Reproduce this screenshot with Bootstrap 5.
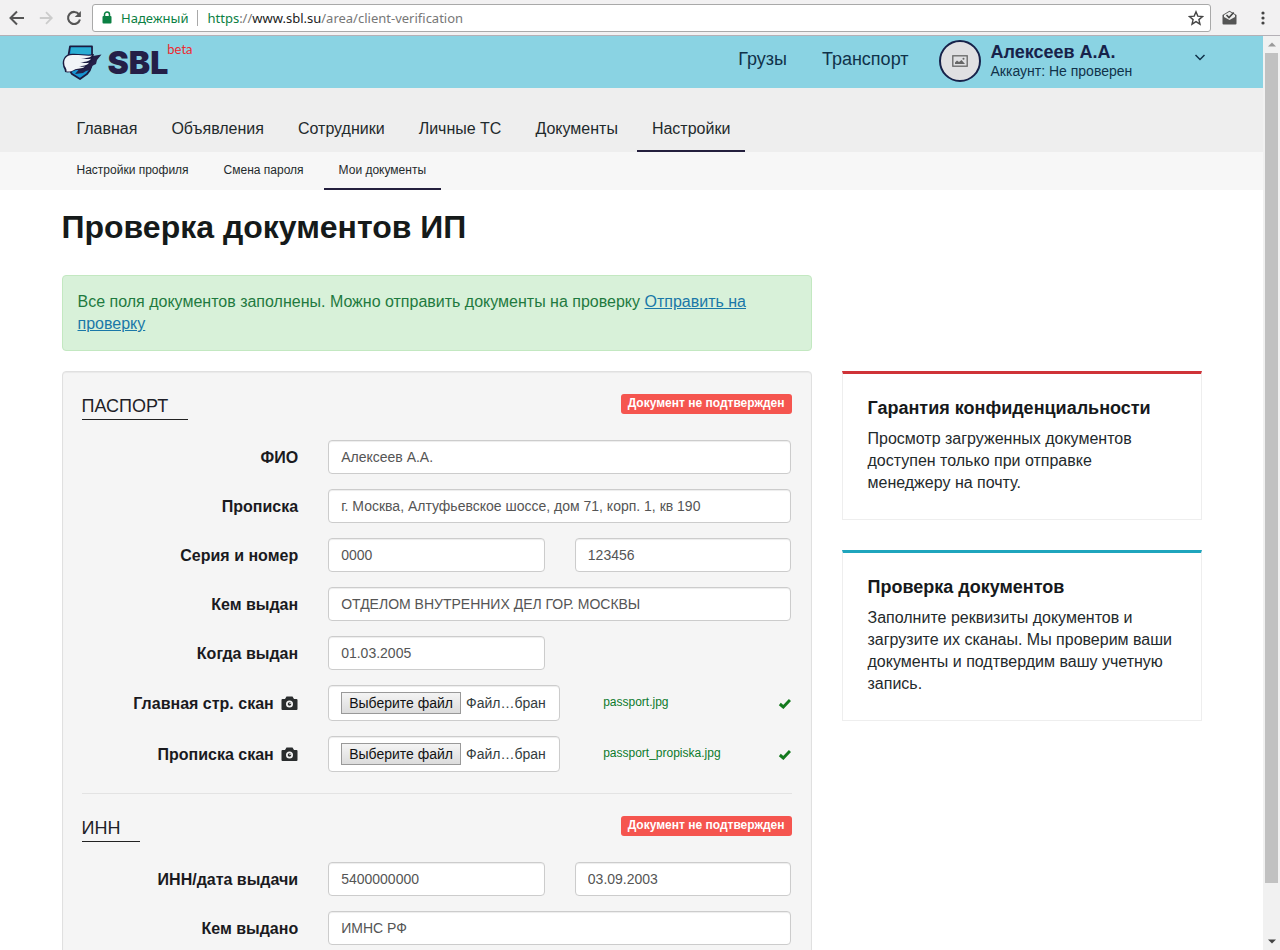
<!DOCTYPE html>
<html lang="ru">
<head>
<meta charset="utf-8">
<meta name="viewport" content="width=device-width, initial-scale=1">
<title>SBL — Проверка документов ИП</title>
<link href="https://cdn.jsdelivr.net/npm/bootstrap@5.3.0/dist/css/bootstrap.min.css" rel="stylesheet">
<style>
  body { font-family: "Liberation Sans", Arial, sans-serif; font-size: 16px; line-height: 22px; color: #1f2a2c; }
  a { color: inherit; text-decoration: none; }
  /* browser toolbar */
  .toolbar { height: 36px; background: #f2f1f2; border-bottom: 1px solid #b4b0b6; font: 13px/20px "Noto Sans", sans-serif; padding: 0 15px 0 8px; }
  .toolbar button, .account-toggle { border: 0; background: none; padding: 0; line-height: 0; }
  .omnibox { height: 28px; background: #fff; border: 1px solid #a9a9a9; border-radius: 3px; margin: 0 7px 0 10px; padding: 0 6px 0 9px; }
  .omnibox .secure { color: #0b8043; border-right: 1px solid #a9a9a9; line-height: 16px; padding-right: 9px; margin: 0 9px 0 9px; }
  .url-text { color: #777; }
  .url-text b { font-weight: 400; color: #222; }
  .url-text i { font-style: normal; color: #0b8043; }
  /* scrollbar */
  .scroll-rail { width: 17px; background: #f1f1f1; }
  .scroll-rail .arrow { height: 17px; line-height: 0; }
  .scroll-thumb { flex: 830 1 0; width: 13px; background: #c1c1c1; }
  .scroll-rest { flex: 50 1 0; }
  /* page */
  .wrap { max-width: 1170px; padding: 0 15px; margin: 0 auto; }
  .topbar { background: #8ad3e3; color: #17224a; }
  .topbar .wrap { height: 52px; padding-bottom: 2px; padding-right: 11px; }
  .brand-name { font: 900 32px/32px Inter, sans-serif; color: #241f47; margin: 3px 0 0 5px; }
  .brand-beta { font: 13px/16px Lato, sans-serif; color: #ee2a30; margin-top: 5px; margin-left: -1px; }
  .top-links { padding-bottom: 4px; gap: 35px; font-size: 18px; line-height: 24px; color: #10324a; }
  .avatar { width: 42px; height: 42px; border: 2px solid #17224a; border-radius: 50%; background: #e0e0e2; margin-left: 30px; }
  .account { width: 215px; margin-left: 10px; }
  .account-name { font-size: 18px; line-height: 20px; font-weight: 700; }
  .account-state { font-size: 14px; line-height: 18px; color: #10324a; }
  .mainnav { background: #eee; }
  .mainnav a { padding: 30px 15px 10px; border-bottom: 2px solid transparent; }
  .subnav { background: #f7f7f7; font-size: 12px; line-height: 18px; }
  .subnav .wrap { gap: 5px; }
  .subnav a { padding: 9px 15px 9px; border-bottom: 2px solid transparent; }
  .mainnav a.active, .subnav a.active { border-color: #241f3d; }
  h1 { font-size: 32px; line-height: 36px; font-weight: 700; color: #151a1a; margin: 19px 0 30px; }
  .gutter { --bs-gutter-x: 30px; }
  .notice { background: #d8f1d9; border: 1px solid #c3e8c1; border-radius: 4px; color: #1f7a3f; padding: 15px; margin-bottom: 20px; }
  .notice a { color: #1a78a8; text-decoration: underline; }
  .panel { background: #f5f5f5; border: 1px solid #e0e0e0; border-radius: 4px; box-shadow: inset 0 1px 1px rgba(0,0,0,.05); padding: 22px 19px 19px; }
  .doc-head { margin-bottom: 20px; }
  .doc-head h2 { font-size: 18px; line-height: 20px; font-weight: 400; color: #1f1f28; margin: 0; padding: 2px 20px 3px 0; border-bottom: 1px solid #222; }
  .state-tag { background: #f5554f; color: #fff; font-size: 12px; line-height: 18px; font-weight: 700; padding: 0 7px 2px; border-radius: 3px; }
  .line { margin-bottom: 15px; }
  .line .name { font-weight: 700; color: #1a1a1e; text-align: right; padding-top: 2px; }
  .name svg { margin-left: 3px; vertical-align: -1px; }
  .field { height: 34px; width: 100%; padding: 0 12px; font-size: 14px; color: #555; background: #fff; border: 1px solid #ccc; border-radius: 4px; box-shadow: inset 0 1px 1px rgba(0,0,0,.075); }
  .filebox { width: 232px; height: 36px; color: #333c40; white-space: nowrap; }
  .filebox button { border: 1px solid #999; background: linear-gradient(#f4f4f4, #dcdcdc); color: #111; height: 22px; line-height: 18px; padding: 0 7px; margin-right: 5px; }
  .filelink { font-size: 12px; line-height: 18px; color: #0b7a2c; margin-left: 43px; padding-bottom: 2px; }
  .rule { border-top: 1px solid #e3e3e3; margin: 21px 0 22px; }
  .info { background: #fff; border: 1px solid #eee; border-top: 3px solid #cf3338; padding: 23px 25px 25px; margin-bottom: 30px; }
  .info.teal { border-top-color: #1fa5bd; }
  .info h3 { font-size: 18px; line-height: 22px; font-weight: 700; color: #16191b; margin: 0 0 9px; }
  .info p { margin: 0; }
</style>
</head>
<body class="vh-100 overflow-hidden d-flex flex-column">

<div class="toolbar d-flex align-items-center flex-shrink-0">
  <button aria-label="Назад"><svg width="18" height="18" viewBox="0 0 18 18" fill="none" stroke="#555" stroke-width="2"><path d="M16 9H3M9 2.500 2.500 9 9 15.500"/></svg></button>
  <button class="ms-2 ps-1" aria-label="Вперёд"><svg width="16" height="18" viewBox="0 0 18 18" fill="none" stroke="#ccc" stroke-width="2"><path d="M2 9h13M9 2.500 15.500 9 9 15.500"/></svg></button>
  <button class="ms-2 ps-1" aria-label="Обновить"><svg width="16" height="18" viewBox="0 0 17 18"><path d="M13.800 5.200A6.400 6.400 0 1 0 14.800 10.500" fill="none" stroke="#555" stroke-width="2.200"/><path d="M15.800 1.500V8H9.300z" fill="#555"/></svg></button>
  <div class="omnibox d-flex align-items-center flex-fill">
    <svg width="10" height="13" viewBox="0 0 10 13"><path d="M2.500 6V3.500a2.500 2.500 0 0 1 5 0V6" fill="none" stroke="#0b8043" stroke-width="1.500"/><rect x=".5" y="5" width="9" height="7.500" rx="1" fill="#0b8043"/></svg>
    <span class="secure">Надежный</span>
    <a class="url-text flex-fill" href="#"><i>https</i>://<b>www.sbl.su</b>/area/client-verification</a>
    <button aria-label="В закладки"><svg width="16" height="16" viewBox="0 0 16 16"><path d="m8 1.800 1.800 4.300 4.700.4-3.600 3.100 1.100 4.600L8 11.700l-4 2.500 1.100-4.600L1.500 6.500l4.700-.4z" fill="none" stroke="#444" stroke-width="1.400"/></svg></button>
  </div>
  <button class="ms-1" aria-label="Почта"><svg width="15" height="15" viewBox="0 0 15 15"><path d="M.5 5 7.500.7 14.500 5v8.500a1 1 0 0 1-1 1h-12a1 1 0 0 1-1-1z" fill="#555"/><path d="M2 5 7.500 1.700 13 5v2L7.500 10 2 7z" fill="#eee"/><path d="m4.500 5 2.500 2.500 4.700-5" fill="none" stroke="#444" stroke-width="1.600"/></svg></button>
  <button class="ps-4" aria-label="Меню"><svg width="4" height="16" viewBox="0 0 4 16" fill="#444"><circle cx="2" cy="3" r="1.600"/><circle cx="2" cy="8" r="1.600"/><circle cx="2" cy="13" r="1.600"/></svg></button>
</div>

<div class="d-flex flex-fill overflow-hidden">
  <div class="flex-fill overflow-hidden">
    <header class="topbar">
      <div class="wrap d-flex align-items-center">
        <a class="d-flex align-items-center align-self-stretch" href="#">
          <svg class="mt-1" width="41" height="36" viewBox="0 0 41 36" aria-hidden="true">
            <path d="M8 1.500h22V10c1 8-1 15-5 19l-7 5-8-5C5 24 6 10 8 1.500z" fill="#1594d2" stroke="#1b1b40" stroke-width="1.800" stroke-linejoin="round"/>
            <path d="M8.900 2.400h20.200V9H8.900z" fill="#2aaed4"/>
            <path d="M28 11.500 39.500 9.500 35 15l-1 4-4 2-2 4-4 1-3 2-8 1z" fill="#241f47"/>
            <path d="M8 9C2 10 0 16 1 20c0 3 2 4 2 7 3 1 7 0 11-2 7 0 10-2 12-6 4-1 4-4 5-6l1-4c-7 2-15-1-24 0z" fill="#1b1b40"/>
            <path d="M8 10.300c8-1 15 1 22 .200-2 2.500-6 2.800-11 2.800 5 .9 7 .9 10 .5-2 3-6 3.300-11 3.500 4 .8 6 .8 9 .4-2 3-6 3.300-10 3.500 3 .7 4 .7 6 .4-3 3-8 1.400-11 3.400-3 2-6 1.500-7.500 1.500C5 23 2.300 22 2.300 19c-.5-4 1.200-7.500 5.700-8.700z" fill="#f1f4f8"/>
          </svg>
          <span class="brand-name">SBL</span><span class="brand-beta align-self-start">beta</span>
        </a>
        <nav class="top-links ms-auto d-flex">
          <a href="#">Грузы</a>
          <a href="#">Транспорт</a>
        </nav>
        <span class="avatar d-flex align-items-center justify-content-center">
          <svg width="16" height="12" viewBox="0 0 16 12"><rect x=".8" y=".8" width="14.400" height="10.400" fill="none" stroke="#666" stroke-width="1.300"/><path d="M3 9V7.500l2-2 2 1.500 2.500-2L13 9z" fill="#666"/><circle cx="11.500" cy="3.800" r="1" fill="#666"/></svg>
        </span>
        <div class="account d-flex align-items-center justify-content-between pb-1">
          <div class="pt-1">
            <div class="account-name">Алексеев А.А.</div>
            <div class="account-state">Аккаунт: Не проверен</div>
          </div>
          <button class="account-toggle pb-1" aria-label="Меню аккаунта"><svg width="12" height="9" viewBox="0 0 12 9"><path d="m1.500 2 4.500 4.500L10.500 2" fill="none" stroke="#10324a" stroke-width="1.500"/></svg></button>
        </div>
      </div>
    </header>
    <nav class="mainnav">
      <div class="wrap d-flex gap-1">
        <a href="#">Главная</a><a href="#">Объявления</a><a href="#">Сотрудники</a><a href="#">Личные ТС</a><a href="#">Документы</a><a class="active" href="#">Настройки</a>
      </div>
    </nav>
    <nav class="subnav">
      <div class="wrap d-flex">
        <a href="#">Настройки профиля</a><a href="#">Смена пароля</a><a class="active" href="#">Мои документы</a>
      </div>
    </nav>

    <main class="wrap">
      <h1>Проверка документов ИП</h1>
      <div class="row gutter">
        <div class="col-8">
          <div class="notice">Все поля документов заполнены. Можно отправить документы на проверку <a href="#">Отправить на проверку</a></div>
        </div>
      </div>
      <div class="row gutter">
        <div class="col-8">
          <form class="panel">
            <div class="doc-head d-flex justify-content-between align-items-start">
              <h2>ПАСПОРТ</h2><span class="state-tag">Документ не подтвержден</span>
            </div>
            <div class="row gutter line align-items-center">
              <label class="col-4 name" for="fio">ФИО</label>
              <div class="col-8"><input class="field" id="fio" value="Алексеев А.А."></div>
            </div>
            <div class="row gutter line align-items-center">
              <label class="col-4 name" for="addr">Прописка</label>
              <div class="col-8"><input class="field" id="addr" value="г. Москва, Алтуфьевское шоссе, дом 71, корп. 1, кв 190"></div>
            </div>
            <div class="row gutter line align-items-center">
              <label class="col-4 name" for="series">Серия и номер</label>
              <div class="col-4"><input class="field" id="series" value="0000"></div>
              <div class="col-4"><input class="field" aria-label="Номер" value="123456"></div>
            </div>
            <div class="row gutter line align-items-center">
              <label class="col-4 name" for="issuer">Кем выдан</label>
              <div class="col-8"><input class="field" id="issuer" value="ОТДЕЛОМ ВНУТРЕННИХ ДЕЛ ГОР. МОСКВЫ"></div>
            </div>
            <div class="row gutter line align-items-center">
              <label class="col-4 name" for="issued">Когда выдан</label>
              <div class="col-4"><input class="field" id="issued" value="01.03.2005"></div>
            </div>
            <div class="row gutter line align-items-center">
              <label class="col-4 name" for="scan1">Главная стр. скан <svg width="17" height="14" viewBox="0 0 17 14"><path d="M1.500 3H4l1.500-2.500h6L13 3h2.500a1 1 0 0 1 1 1v9a1 1 0 0 1-1 1h-14a1 1 0 0 1-1-1V4a1 1 0 0 1 1-1z" fill="#2a2d2e"/><circle cx="8.500" cy="8" r="3.500" fill="#f5f5f5"/><circle cx="8.500" cy="8" r="1.800" fill="#2a2d2e"/><circle cx="9.100" cy="7.400" r=".7" fill="#f5f5f5"/></svg></label>
              <div class="col-8 d-flex align-items-center">
                <div class="field filebox d-flex align-items-center"><input class="visually-hidden" type="file" id="scan1"><button type="button">Выберите файл</button><span>Файл…бран</span></div>
                <a class="filelink" href="#">passport.jpg</a>
                <svg class="ms-auto" width="13" height="11" viewBox="0 0 13 11"><path d="m1.800 6 3.500 3L12 2" fill="none" stroke="#147a1e" stroke-width="3"/></svg>
              </div>
            </div>
            <div class="row gutter line align-items-center">
              <label class="col-4 name" for="scan2">Прописка скан <svg width="17" height="14" viewBox="0 0 17 14"><path d="M1.500 3H4l1.500-2.500h6L13 3h2.500a1 1 0 0 1 1 1v9a1 1 0 0 1-1 1h-14a1 1 0 0 1-1-1V4a1 1 0 0 1 1-1z" fill="#2a2d2e"/><circle cx="8.500" cy="8" r="3.500" fill="#f5f5f5"/><circle cx="8.500" cy="8" r="1.800" fill="#2a2d2e"/><circle cx="9.100" cy="7.400" r=".7" fill="#f5f5f5"/></svg></label>
              <div class="col-8 d-flex align-items-center">
                <div class="field filebox d-flex align-items-center"><input class="visually-hidden" type="file" id="scan2"><button type="button">Выберите файл</button><span>Файл…бран</span></div>
                <a class="filelink" href="#">passport_propiska.jpg</a>
                <svg class="ms-auto" width="13" height="11" viewBox="0 0 13 11"><path d="m1.800 6 3.500 3L12 2" fill="none" stroke="#147a1e" stroke-width="3"/></svg>
              </div>
            </div>
            <div class="rule"></div>
            <div class="doc-head d-flex justify-content-between align-items-start">
              <h2>ИНН</h2><span class="state-tag">Документ не подтвержден</span>
            </div>
            <div class="row gutter line align-items-center">
              <label class="col-4 name" for="inn">ИНН/дата выдачи</label>
              <div class="col-4"><input class="field" id="inn" value="5400000000"></div>
              <div class="col-4"><input class="field" aria-label="Дата выдачи" value="03.09.2003"></div>
            </div>
            <div class="row gutter line align-items-center">
              <label class="col-4 name" for="innby">Кем выдано</label>
              <div class="col-8"><input class="field" id="innby" value="ИМНС РФ"></div>
            </div>
          </form>
        </div>
        <aside class="col-4">
          <section class="info">
            <h3>Гарантия конфиденциальности</h3>
            <p>Просмотр загруженных документов доступен только при отправке менеджеру на почту.</p>
          </section>
          <section class="info teal">
            <h3>Проверка документов</h3>
            <p>Заполните реквизиты документов и загрузите их сканаы. Мы проверим ваши документы и подтвердим вашу учетную запись.</p>
          </section>
        </aside>
      </div>
    </main>
  </div>
  <div class="scroll-rail d-flex flex-column align-items-center flex-shrink-0">
    <div class="arrow d-flex align-items-center"><svg width="8" height="5" viewBox="0 0 8 5"><path d="M0 4.500h8L4 .5z" fill="#999"/></svg></div>
    <div class="scroll-thumb"></div>
    <div class="scroll-rest"></div>
    <div class="arrow d-flex align-items-center"><svg width="8" height="5" viewBox="0 0 8 5"><path d="M0 .5h8l-4 4z" fill="#444"/></svg></div>
  </div>
</div>
<script src="https://cdn.jsdelivr.net/npm/bootstrap@5.3.0/dist/js/bootstrap.bundle.min.js"></script>
</body>
</html>
